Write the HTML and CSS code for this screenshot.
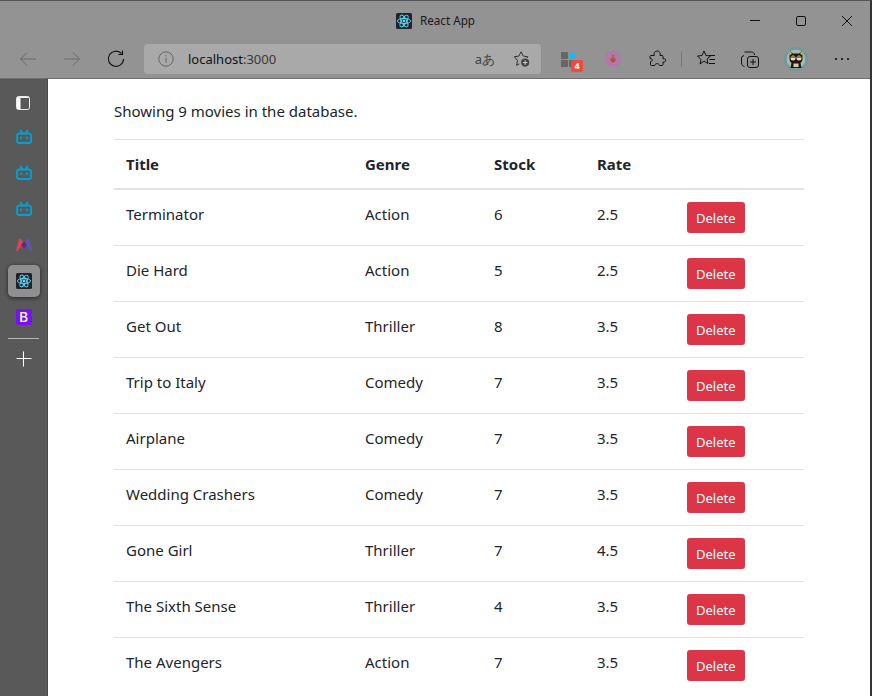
FILE: index.html
```html
<!DOCTYPE html>
<html lang="en">
<head>
    <meta charset="UTF-8">
    <meta name="viewport" content="width=device-width, initial-scale=1.0">
    <title>React App</title>
    <link rel="stylesheet" href="styles.css">
</head>
<body>
    <svg class="defs" width="0" height="0">
        <symbol id="atom" viewBox="0 0 16 16">
            <rect width="16" height="16" rx="1.500" fill="#20232a"/>
            <g fill="none" stroke="#61dafb" stroke-width="0.9">
                <ellipse cx="8" cy="8" rx="6.600" ry="2.600"/>
                <ellipse cx="8" cy="8" rx="6.600" ry="2.600" transform="rotate(60 8 8)"/>
                <ellipse cx="8" cy="8" rx="6.600" ry="2.600" transform="rotate(120 8 8)"/>
            </g>
            <circle cx="8" cy="8" r="1.400" fill="#61dafb"/>
        </symbol>
        <symbol id="bili" viewBox="0 0 16 16">
            <g fill="none" stroke="#00a1d6" stroke-width="1.800" stroke-linecap="round">
                <rect x="1" y="4.500" width="14" height="9.500" rx="2"/>
                <path d="M4.500 1.500 6 3.500M11.500 1.500 10 3.500"/>
            </g>
            <path d="M5 7.500v2.500M11 7.500v2.500" stroke="#00a1d6" stroke-width="1.700"/>
        </symbol>
    </svg>

    <header class="titlebar">
        <div class="tab-title">
            <svg class="favicon"><use href="#atom"/></svg>
            <span class="tab-text">React App</span>
        </div>
        <div class="window-btns">
            <svg width="12" height="12" viewBox="0 0 12 12"><path d="M1 5.500h10" stroke="#111" fill="none"/></svg>
            <svg width="12" height="12" viewBox="0 0 12 12"><rect x="1.500" y="1.500" width="9" height="9" rx="1.500" stroke="#111" fill="none"/></svg>
            <svg width="12" height="12" viewBox="0 0 12 12"><path d="M1 1l10 10M11 1 1 11" stroke="#111" fill="none"/></svg>
        </div>
    </header>

    <nav class="toolbar">
        <svg class="tool-icon" viewBox="0 0 20 20"><path d="M18 10H2.500M9 3.500 2.500 10 9 16.500" stroke="#6a6a6a" fill="none"/></svg>
        <svg class="tool-icon" viewBox="0 0 20 20"><path d="M2 10h15.500M11 3.500l6.500 6.500-6.500 6.500" stroke="#6a6a6a" fill="none"/></svg>
        <svg class="tool-icon" viewBox="0 0 20 20"><path d="M15.500 4.500A7.600 7.600 0 1 0 17.600 10M16.500 1.500v4h-4" stroke="#111" stroke-width="1.100" fill="none"/></svg>
        <div class="addressbar">
            <svg class="info" viewBox="0 0 16 16"><circle cx="8" cy="8" r="7.200" stroke="#666" fill="none"/><path d="M8 7v5M8 4v1.400" stroke="#666" fill="none"/></svg>
            <span class="url">localhost<span class="port">:3000</span></span>
            <span class="translate">aあ</span>
            <svg class="star" viewBox="0 0 20 20"><path d="M7 15.500 4 17l1-5.500L1.500 7.500l5-.7L9 2l2.500 4.800 5 .7-1.200 1.400" stroke="#222" fill="none"/><circle cx="13.500" cy="14" r="4.500" fill="#444"/><path d="M13.500 11.500v5M11 14h5" stroke="#ddd"/></svg>
        </div>
        <div class="ext-icons">
            <div class="ext-badge">
                <svg class="ext-logo" viewBox="0 0 16 16"><rect x="0" y="1" width="7" height="7" rx="1" fill="#666"/><rect x="0" y="9" width="7" height="7" rx="1" fill="#666"/><path d="M11.500 0l4.500 4.500-4.500 4.500L7 4.500z" fill="#1cb6f2"/><rect x="8" y="9" width="6" height="7" rx="1" fill="#666"/></svg>
                <span class="badge">4</span>
            </div>
            <svg class="tool-icon ext-pink" viewBox="0 0 20 20"><circle cx="10" cy="10" r="8" fill="#b079a8"/><path d="M9 5.500l1 1 1-1-.5 3a2.600 2.600 0 1 1-1 0z" fill="#b8503e"/></svg>
            <svg class="tool-icon puzzle" viewBox="0 0 20 20"><path d="M4 6.500h3.200c-.8-2.500.8-4.500 3-4.500s3.600 2 2.800 4.500h2c.8 0 1 .4 1 1v2.300c2.500-.6 3.200 1 2.400 2.400-.5.900-1.400 1.100-2.400.8v2.300c0 .8-.4 1.200-1 1.200h-2.500c-.5-1.800-2-2-3-1.800-1 .2-1.700 1-1.800 1.800H4.500c-.8 0-1-.4-1-1v-2.800c1.200-.3 1.800-1 1.800-1.800S4.700 9.800 3 9.500V7.500c0-.6.400-1 1-1z" stroke="#111" fill="none"/></svg>
            <span class="divider"></span>
            <svg class="tool-icon" viewBox="0 0 20 20"><path d="M8 2l2 4.500 4.500.5-3.500 3 1 4.500-4-2.300L4 15l1-4.500L1.500 7 6 6.500z" stroke="#111" fill="none"/><path d="M13 6.500h6M13.500 10.500h5.500M13 14.500h6" stroke="#111"/></svg>
            <svg class="tool-icon collections" viewBox="0 0 20 20"><path d="M4 6.500 1.500 8v6c0 2 1 3 3 3.500M4.500 3h7c1.500 0 3 1 3 3" stroke="#111" fill="none"/><rect x="7.500" y="7.500" width="11" height="11" rx="2.500" stroke="#111" fill="none"/><path d="M13 10v6M10 13h6" stroke="#111"/></svg>
            <svg class="avatar" viewBox="0 0 24 24"><circle cx="12" cy="12" r="12" fill="#6f9a9c"/><circle cx="12" cy="12" r="9.500" fill="#a9b8b4"/><path d="M5.500 4 9 6.500h6L18.500 4v8c0 2.500-2 4-2 4l1 5h-11l1-5s-2-1.500-2-4z" fill="#231710"/><circle cx="9" cy="11" r="2.500" fill="#eadfb8"/><circle cx="15" cy="11" r="2.500" fill="#eadfb8"/><path d="M5 3.500l3 3-2.500 2zM19 3.500l-3 3 2.500 2z" fill="#d7b84a"/><path d="M6.500 10h4.500M13 10h4.500" stroke="#231710"/><rect x="9.500" y="16.500" width="5" height="3.500" fill="#d8ccaa"/></svg>
            <svg class="tool-icon more" viewBox="0 0 20 20"><circle cx="4" cy="10" r="1.100" fill="#111"/><circle cx="10" cy="10" r="1.100" fill="#111"/><circle cx="16" cy="10" r="1.100" fill="#111"/></svg>
        </div>
    </nav>

    <div class="viewport">
        <aside class="sidebar">
            <div class="side-item panel-item">
                <svg class="panel-icon" viewBox="0 0 14 14"><rect x="0.500" y="0.500" width="13" height="13" rx="2" fill="#595959" stroke="#eee"/><path d="M1 1.500h12" stroke="#eee"/><path d="M1 2h3.500v11H1z" fill="#fff"/></svg>
            </div>
            <div class="side-item"><svg class="side-icon"><use href="#bili"/></svg></div>
            <div class="side-item"><svg class="side-icon"><use href="#bili"/></svg></div>
            <div class="side-item"><svg class="side-icon"><use href="#bili"/></svg></div>
            <div class="side-item">
                <svg class="side-icon" viewBox="0 0 16 16"><path d="M0 14 3.500 1 8 5.500V12L5 9.500 1.500 14z" fill="#e0415f"/><path d="M16 14 12.500 1 8 5.500V12l3-2.500 3.500 4.500z" fill="#5a57b5"/><path d="M8 4 5 8l3 4 3-4z" fill="#6b2a6a"/></svg>
            </div>
            <div class="side-item active"><svg class="side-icon"><use href="#atom"/></svg></div>
            <div class="side-item">
                <div class="bootstrap-icon">B</div>
            </div>
            <div class="side-sep"></div>
            <div class="side-item">
                <svg class="side-icon" viewBox="0 0 16 16"><path d="M7.500 .5v15M.5 7.500h15" stroke="#fff" fill="none"/></svg>
            </div>
        </aside>

        <main class="content">
            <p class="summary">Showing 9 movies in the database.</p>
            <table class="movies">
                <colgroup>
                    <col class="col-title">
                    <col class="col-genre">
                    <col class="col-stock">
                    <col class="col-rate">
                    <col class="col-action">
                </colgroup>
                <thead>
                    <tr><th>Title</th><th>Genre</th><th>Stock</th><th>Rate</th><th></th></tr>
                </thead>
                <tbody>
                    <tr><td>Terminator</td><td>Action</td><td>6</td><td>2.5</td><td><button class="btn-delete">Delete</button></td></tr>
                    <tr><td>Die Hard</td><td>Action</td><td>5</td><td>2.5</td><td><button class="btn-delete">Delete</button></td></tr>
                    <tr><td>Get Out</td><td>Thriller</td><td>8</td><td>3.5</td><td><button class="btn-delete">Delete</button></td></tr>
                    <tr><td>Trip to Italy</td><td>Comedy</td><td>7</td><td>3.5</td><td><button class="btn-delete">Delete</button></td></tr>
                    <tr><td>Airplane</td><td>Comedy</td><td>7</td><td>3.5</td><td><button class="btn-delete">Delete</button></td></tr>
                    <tr><td>Wedding Crashers</td><td>Comedy</td><td>7</td><td>3.5</td><td><button class="btn-delete">Delete</button></td></tr>
                    <tr><td>Gone Girl</td><td>Thriller</td><td>7</td><td>4.5</td><td><button class="btn-delete">Delete</button></td></tr>
                    <tr><td>The Sixth Sense</td><td>Thriller</td><td>4</td><td>3.5</td><td><button class="btn-delete">Delete</button></td></tr>
                    <tr><td>The Avengers</td><td>Action</td><td>7</td><td>3.5</td><td><button class="btn-delete">Delete</button></td></tr>
                </tbody>
            </table>
        </main>
    </div>
</body>
</html>
```

FILE: styles.css
```css
/* Browser frame */
html, body {
    height: 100%;
}
body {
    margin: 0;
    height: 696px;
    overflow: hidden;
    display: flex;
    flex-direction: column;
    font-family: "Noto Sans", "Open Sans", Arial, sans-serif;
    color: #212529;
    background-color: #939393;
    border-top: 1px solid #555;
    border-right: 2px solid #333;
    box-sizing: border-box;
}
.defs {
    display: none;
}
.titlebar {
    height: 39px;
    display: flex;
    align-items: center;
    justify-content: center;
    position: relative;
}
.tab-title {
    display: flex;
    align-items: center;
    gap: 8px;
    font-size: 11.7px;
    color: #1a1a1a;
    margin-right: -1px;
}
.tab-text {
    margin-bottom: 2px;
}
.favicon {
    width: 16px;
    height: 16px;
}
.window-btns {
    position: absolute;
    right: 17px;
    top: 14px;
    display: flex;
    gap: 34px;
}
.toolbar {
    height: 38px;
    display: flex;
    align-items: center;
    padding-left: 18px;
    border-bottom: 1px solid #6d6d6d;
}
.tool-icon {
    width: 20px;
    height: 20px;
    margin-right: 24px;
    flex: none;
}
.addressbar {
    width: 397px;
    height: 30px;
    margin-left: -6px;
    background-color: #a9a9a9;
    border-radius: 4px;
    display: flex;
    align-items: center;
    padding-left: 14px;
    box-sizing: border-box;
}
.info {
    width: 16px;
    height: 16px;
    margin-right: 14px;
}
.url {
    font-size: 13px;
    color: #111;
    flex: 1;
}
.port {
    color: #3a3a3a;
}
.translate {
    font-size: 13px;
    color: #444;
    margin-right: 18px;
}
.star {
    width: 18px;
    height: 18px;
    margin-right: 10px;
}
.ext-icons {
    display: flex;
    align-items: center;
    margin-left: 20px;
}
.ext-badge {
    position: relative;
    width: 16px;
    height: 16px;
    margin-right: 26px;
}
.ext-logo {
    display: block;
    width: 16px;
    height: 16px;
}
.ext-icons > .tool-icon {
    margin-right: 23px;
}
.badge {
    position: absolute;
    left: 10px;
    top: 9px;
    width: 12px;
    height: 12px;
    background-color: #f04a3e;
    border-radius: 2px;
    color: #fff;
    font-size: 9px;
    font-weight: 700;
    line-height: 12px;
    text-align: center;
}
.ext-icons > .ext-pink {
    margin-right: 24px;
}
.ext-icons > .puzzle {
    margin-right: 14px;
}
.divider {
    width: 1px;
    height: 16px;
    background-color: #777;
    margin-right: 14px;
}
.ext-icons > .collections {
    margin-left: 1px;
    margin-right: 24px;
}
.avatar {
    width: 24px;
    height: 24px;
    margin-right: 24px;
}
.ext-icons > .more {
    margin-right: 0;
}

/* Left rail + page */
.viewport {
    flex: 1;
    display: flex;
    min-height: 0;
}
.sidebar {
    width: 48px;
    flex: none;
    background-color: #595959;
    border-right: 1px solid #4a4a4a;
    box-sizing: border-box;
    padding-top: 6px;
    display: flex;
    flex-direction: column;
    align-items: center;
}
.side-item {
    width: 32px;
    height: 32px;
    margin-bottom: 4px;
    display: flex;
    align-items: center;
    justify-content: center;
    border-radius: 5px;
}
.panel-item {
    padding: 3px 2px 0 0;
    box-sizing: border-box;
}
.panel-icon {
    width: 14px;
    height: 14px;
}
.side-item.active {
    background-color: #8f8f8f;
    box-shadow: 0 1px 4px rgba(0, 0, 0, 0.6);
}
.side-icon {
    width: 16px;
    height: 16px;
}
.bootstrap-icon {
    width: 16px;
    height: 16px;
    background-color: #7a10f0;
    border-radius: 2px;
    color: #fff;
    font-size: 14px;
    font-weight: 500;
    line-height: 16px;
    text-align: center;
}
.side-sep {
    width: 31px;
    height: 1px;
    background-color: #b5b5b5;
    margin: 1px 0 4px;
}
.content {
    flex: 1;
    background-color: #fff;
    padding: 20px 66px 0;
    min-width: 0;
    overflow: hidden;
}
.summary {
    margin: 0 0 16px;
    font-size: 15px;
    line-height: 24px;
}

/* Table */
.movies {
    width: 690px;
    table-layout: fixed;
    border-collapse: collapse;
    font-size: 15px;
    line-height: 24px;
}
.col-title { width: 239px; }
.col-genre { width: 129px; }
.col-stock { width: 103px; }
.col-rate { width: 90px; }
.col-action { width: 129px; }
.movies th, .movies td {
    padding: 12px;
    text-align: left;
    vertical-align: top;
    border-top: 1px solid #dee2e6;
}
.movies thead th {
    border-bottom: 2px solid #dee2e6;
    font-weight: 700;
}
.movies tbody tr:first-child td {
    border-top: 0;
}
.btn-delete {
    display: block;
    height: 31px;
    padding: 0 9px;
    border: 0;
    border-radius: 3px;
    background-color: #dc3545;
    color: #fff;
    font-family: inherit;
    font-size: 13px;
}
```
